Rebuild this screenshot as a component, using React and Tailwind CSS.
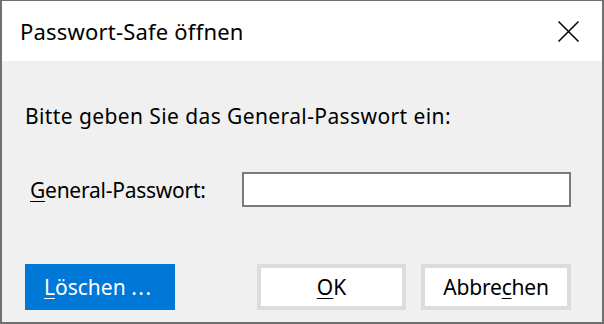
function Mnemonic({ children }) {
  return <span className="underline underline-offset-[3px] decoration-1">{children}</span>;
}

function CloseGlyph() {
  return (
    <svg width="21" height="21" viewBox="0 0 21 21" className="text-black">
      <path d="M0.5 0.5 L20.5 20.5 M20.5 0.5 L0.5 20.5" stroke="currentColor" strokeWidth="1.5" fill="none" />
    </svg>
  );
}

export default function App() {
  return (
    <div className="w-[604px] h-[324px] flex flex-col bg-[#f0f0f0] border-t border-l-2 border-r-2 border-b-2 border-[#707070] font-['Noto_Sans',sans-serif] text-black overflow-hidden">
      {/* Title bar */}
      <div className="h-[60px] shrink-0 bg-white flex items-center justify-between pl-[18px] pr-[23px]">
        <span className="text-[22px] leading-none tracking-[0.2px]">Passwort-Safe öffnen</span>
        <CloseGlyph />
      </div>

      {/* Content */}
      <div className="flex-1 flex flex-col pl-[23px] pr-[30px]">
        <p className="mt-[43px] text-[21px] leading-[24px] tracking-[0.4px]">
          Bitte geben Sie das General-Passwort ein:
        </p>

        <div className="mt-[44px] flex items-center">
          <label className="w-[217px] pl-[5px] text-[21px] leading-[24px] tracking-[-0.25px]">
            <Mnemonic>G</Mnemonic>eneral-Passwort:
          </label>
          <div className="w-[329px] h-[35px] bg-white border-2 border-[#7a7a7a]" />
        </div>

        <div className="mt-[57px] flex items-center">
          <button className="w-[150px] h-[46px] bg-[#0078d7] text-white text-[21px] leading-none text-left pl-[19px]">
            <Mnemonic>L</Mnemonic>öschen <span className="tracking-[1.5px]">...</span>
          </button>
          <button className="ml-[82px] w-[149px] h-[46px] bg-white border-4 border-[#dcdcdc] text-[21px] leading-none">
            <Mnemonic>O</Mnemonic>K
          </button>
          <button className="ml-[15px] w-[150px] h-[46px] bg-white border-4 border-[#dcdcdc] text-[21px] leading-none tracking-[-0.2px]">
            Abbre<Mnemonic>c</Mnemonic>hen
          </button>
        </div>
      </div>
    </div>
  );
}
